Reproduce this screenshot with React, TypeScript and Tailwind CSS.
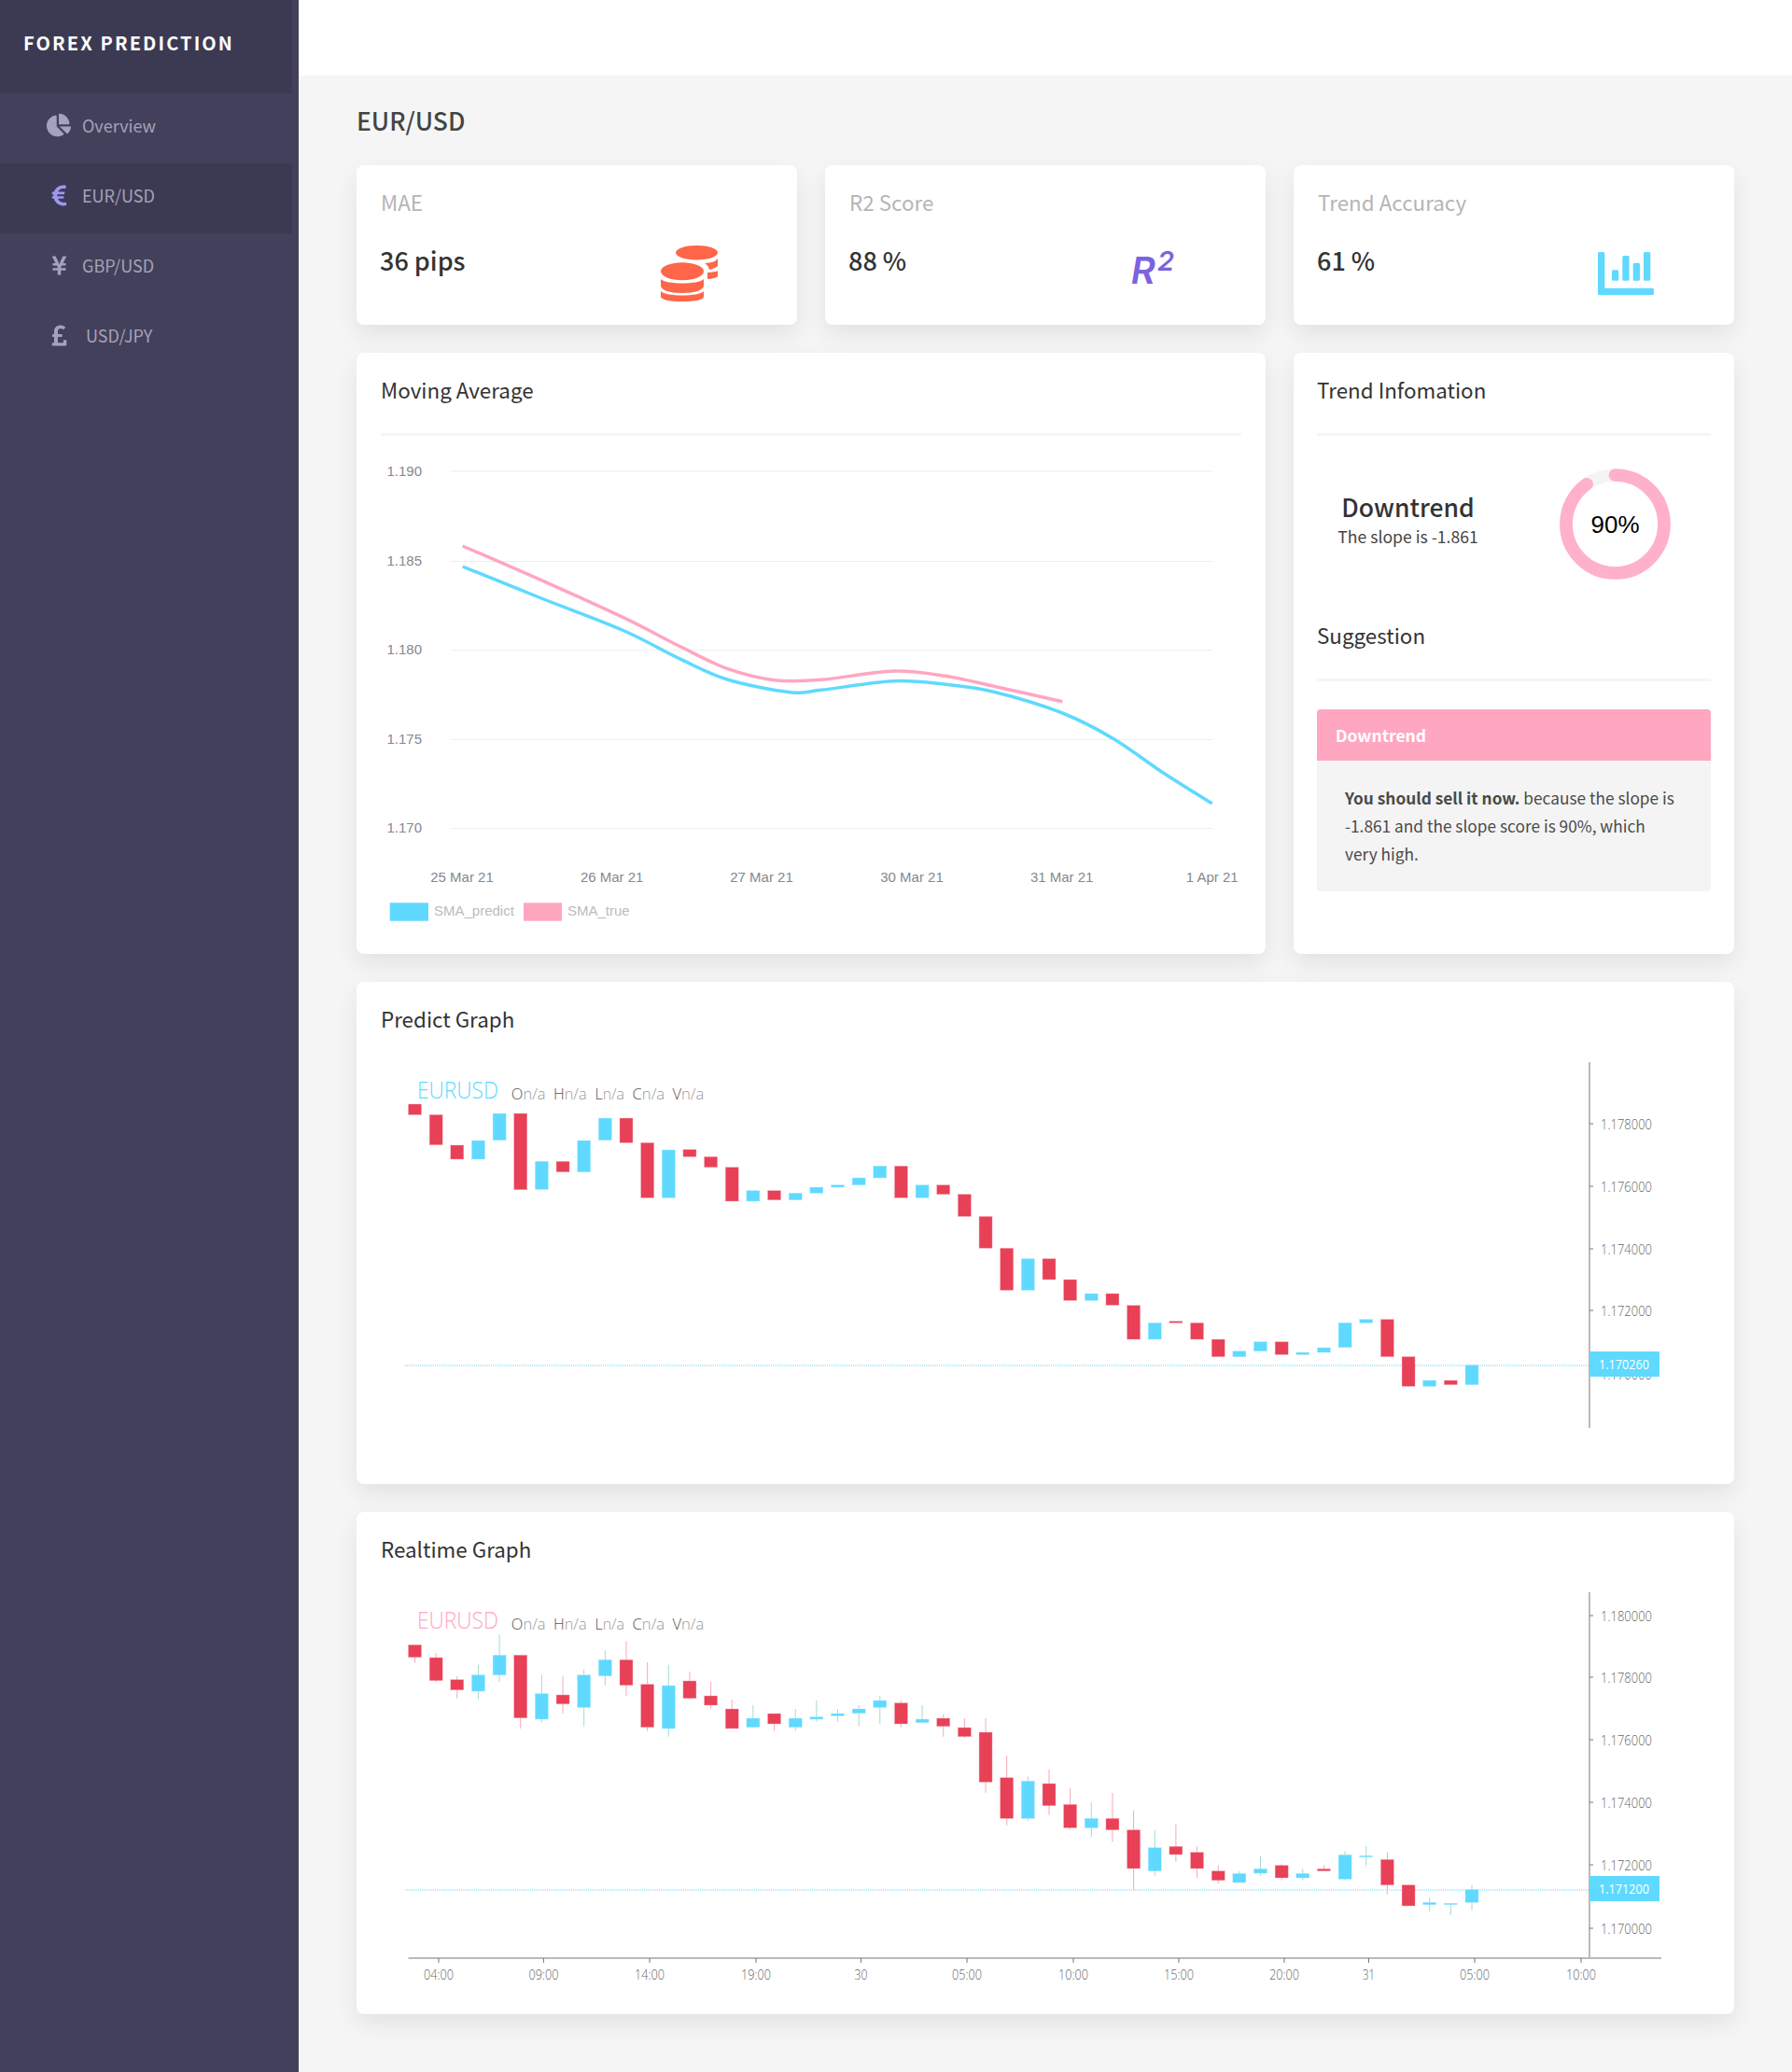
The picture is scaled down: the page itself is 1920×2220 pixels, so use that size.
import { FaChartPie, FaEuroSign, FaYenSign, FaPoundSign } from "react-icons/fa";

const BLUE = "#5fd9ff";
const PINK = "#ffa6c1";
const RED = "#e84057";

type Candle = [number, number, "r" | "b", number?, number?];

// y values are thirds of a pixel, measured from the chart's base line
const predictData: Candle[] = [
    [189, 223, "r"], [223, 320, "r"], [321, 366, "r"], [306, 366, "b"], [219, 305, "b"],
    [219, 464, "r"], [373, 463, "b"], [373, 407, "r"], [306, 407, "b"], [234, 305, "b"],
    [234, 313, "r"], [313, 490, "r"], [336, 490, "b"], [335, 358, "r"], [358, 392, "r"],
    [392, 501, "r"], [467, 501, "b"], [467, 497, "r"], [475, 497, "b"], [456, 475, "b"],
    [449, 456, "b"], [426, 449, "b"], [388, 426, "b"], [388, 490, "r"], [449, 490, "b"],
    [449, 479, "r"], [479, 550, "r"], [550, 652, "r"], [652, 787, "r"], [686, 787, "b"],
    [686, 753, "r"], [753, 820, "r"], [798, 820, "b"], [798, 835, "r"], [836, 945, "r"],
    [892, 945, "b"], [887, 892, "r"], [892, 945, "r"], [945, 1001, "r"], [983, 1001, "b"],
    [953, 983, "b"], [953, 994, "r"], [987, 994, "b"], [972, 987, "b"], [892, 971, "b"],
    [881, 892, "b"], [881, 1001, "r"], [1001, 1096, "r"], [1077, 1096, "b"], [1077, 1091, "r"],
    [1028, 1091, "b"],
];

const realtimeData: Candle[] = [
    [217, 257, "r", 217, 275], [258, 332, "r", 243, 336], [329, 362, "r", 318, 389], [314, 366, "b", 281, 392],
    [250, 314, "b", 183, 336], [250, 452, "r", 250, 486], [374, 456, "b", 314, 467], [378, 407, "r", 318, 437],
    [314, 418, "b", 295, 479], [265, 317, "b", 235, 347], [265, 347, "r", 205, 381], [344, 482, "r", 273, 494],
    [348, 486, "b", 281, 512], [333, 389, "r", 303, 392], [381, 411, "r", 336, 422], [423, 486, "r", 393, 486],
    [453, 482, "b", 411, 482], [438, 471, "r", 438, 494], [453, 482, "b", 423, 494], [449, 456, "b", 396, 464],
    [438, 445, "b", 423, 464], [423, 437, "b", 411, 479], [396, 418, "b", 381, 471], [404, 471, "r", 396, 482],
    [456, 467, "b", 411, 467], [453, 479, "r", 441, 512], [483, 512, "r", 453, 516],
    [498, 658, "r", 453, 692], [644, 775, "r", 573, 797], [655, 775, "b", 640, 782], [663, 734, "r", 618, 764],
    [730, 805, "r", 678, 812], [775, 805, "b", 723, 835], [775, 812, "r", 693, 850], [812, 936, "r", 749, 1005],
    [869, 944, "b", 812, 959], [865, 891, "r", 794, 914], [884, 936, "r", 865, 966], [944, 974, "r", 925, 985],
    [952, 981, "b", 944, 981], [937, 951, "b", 895, 959], [926, 966, "r", 922, 974], [952, 966, "b", 937, 974],
    [937, 944, "r", 925, 944], [892, 970, "b", 880, 974], [895, 899, "b", 865, 929], [907, 989, "r", 884, 1019],
    [989, 1056, "r", 989, 1056], [1045, 1052, "b", 1030, 1075], [1048, 1052, "b", 1048, 1086], [1004, 1045, "b", 989, 1071],
];

const smooth = (pts: number[][]) => {
    let d = `M${pts[0][0]} ${pts[0][1]}`;
    for (let i = 0; i < pts.length - 1; i++) {
        const p0 = pts[Math.max(i - 1, 0)];
        const p1 = pts[i];
        const p2 = pts[i + 1];
        const p3 = pts[Math.min(i + 2, pts.length - 1)];
        const c1 = [p1[0] + (p2[0] - p0[0]) / 6, p1[1] + (p2[1] - p0[1]) / 6];
        const c2 = [p2[0] - (p3[0] - p1[0]) / 6, p2[1] - (p3[1] - p1[1]) / 6];
        d += ` C${c1[0]} ${c1[1]} ${c2[0]} ${c2[1]} ${p2[0]} ${p2[1]}`;
    }
    return d;
};

const pinkLine = [[495.7, 585], [580, 621.7], [670, 662.7], [730, 693.3], [780, 716.7], [830, 728.7], [880, 728.3], [956.7, 719], [1013.3, 724.3], [1066.7, 735.7], [1138.3, 751.7]];
const blueLine = [[495.7, 607], [580, 641], [666.7, 675], [730, 706.7], [780, 728.3], [846.7, 741.7], [880, 739.3], [956.7, 729.7], [1013.3, 733.3], [1066.7, 741.7], [1138.3, 764], [1193.3, 791.7], [1246.7, 828.3], [1298.7, 861]];

function Coins() {
    return (
        <svg width="61" height="60" viewBox="0 0 61 60" fill="#ff6548">
            <ellipse cx="38.5" cy="7.7" rx="22.5" ry="7.7" />
            <path d="M61 14V21C61 23 57 25 52 26C51 22 49 20 47 19C54 19 59 17 61 14Z" />
            <path d="M61 27V32C61 34 58 35.5 50 36V29C57 28.5 60 28 61 27Z" />
            <ellipse cx="23" cy="27.7" rx="23" ry="9.5" />
            <path d="M0 36C5 42 41 42 46 36V43C46 48 36 51 23 51C10 51 0 48 0 43Z" />
            <path d="M0 49C5 55 41 55 46 49V55C46 58 36 60 23 60C10 60 0 58 0 55Z" />
        </svg>
    );
}

function Bars() {
    return (
        <svg width="60" height="46" viewBox="0 0 60 46" fill={BLUE}>
            <path d="M1.5 0H6A1.5 1.5 0 0 1 7.3 1.5V38.7H58.5A1.5 1.5 0 0 1 60 40.2V44.5A1.5 1.5 0 0 1 58.5 46H1.5A1.5 1.5 0 0 1 0 44.5V1.5A1.5 1.5 0 0 1 1.5 0Z" />
            <rect x="15" y="19.3" width="7.3" height="11.4" rx="1.5" />
            <rect x="26.3" y="4" width="7.3" height="26.7" rx="1.5" />
            <rect x="37.7" y="11.7" width="7.3" height="19" rx="1.5" />
            <rect x="49" y="0" width="7.3" height="30.7" rx="1.5" />
        </svg>
    );
}

function StatCard({ label, value, icon, iconClass }: { label: string; value: string; icon: React.ReactNode; iconClass: string }) {
    return (
        <div className="h-[171px] rounded-lg bg-white px-[26px] pt-[26px] shadow-[0_10px_25px_rgba(0,0,0,0.08)]">
            <div className="pb-[3px] text-[22.4px] leading-[27px] text-[#b5b5b5]">{label}</div>
            <div className="mt-[26px] flex items-start justify-between">
                <div className="-ml-px text-[27px] font-medium leading-[40px] text-[#333]">{value}</div>
                <div className={iconClass}>{icon}</div>
            </div>
        </div>
    );
}

function CardTitle({ children }: { children: React.ReactNode }) {
    return <div className="pb-[3px] text-[22.4px] leading-[27px] text-[#333]">{children}</div>;
}

function Divider() {
    return <div className="mt-[30px] h-[3px] bg-[#f5f5f5]" />;
}

function MovingAverage() {
    const grid = [[505, "1.190"], [601.5, "1.185"], [696.5, "1.180"], [792.5, "1.175"], [887.5, "1.170"]] as const;
    const dates = [[495, "25 Mar 21"], [655.7, "26 Mar 21"], [816, "27 Mar 21"], [977, "30 Mar 21"], [1137.7, "31 Mar 21"], [1298.7, "1 Apr 21"]] as const;
    return (
        <svg width="922" height="530" viewBox="408 470 922 530" className="block" fontFamily="'Liberation Sans', sans-serif" fontSize="15">
            {grid.map(([y, t]) => (
                <g key={t}>
                    <line x1="483" x2="1299" y1={y} y2={y} stroke="#eeeeee" strokeWidth="1.2" />
                    <text x="452" y={y + 4.5} textAnchor="end" fill="#85888e">{t}</text>
                </g>
            ))}
            {dates.map(([x, t]) => (
                <text key={t} x={x} y={945} textAnchor="middle" fill="#85888e">{t}</text>
            ))}
            <path d={smooth(blueLine)} fill="none" stroke={BLUE} strokeWidth="3.5" />
            <path d={smooth(pinkLine)} fill="none" stroke={PINK} strokeWidth="3.5" />
            <rect x="417.7" y="967.3" width="41.3" height="19.4" fill={BLUE} />
            <text x="465" y="981" fill="#bbbbbb">SMA_predict</text>
            <rect x="561" y="967.3" width="41" height="19.4" fill={PINK} />
            <text x="608" y="981" fill="#bbbbbb">SMA_true</text>
        </svg>
    );
}

function CandleChart({ y0, data, baseA, baseB, titleColor, legendY, labelY, priceY, price, ticks, axisTop, axisBottom, xTicks }: {
    y0: number;
    data: Candle[];
    baseA: number;
    baseB: number;
    titleColor: string;
    legendY: number;
    labelY: number;
    priceY: number;
    price: string;
    ticks: [number, string][];
    axisTop: number;
    axisBottom: number;
    xTicks?: [number, string, number][];
}) {
    const legend: [string, number, number][] = [["O", 547.8, 36.7], ["H", 593, 35.6], ["L", 637.5, 31.5], ["C", 677.5, 34.7], ["V", 720.4, 33.9]];
    return (
        <svg width="1424" height="440" viewBox={`408 ${y0} 1424 440`} className="block" fontFamily="'Open Sans', sans-serif">
            <text x="447" y={legendY + 9} fill={titleColor} fontSize="25" fontWeight="300" textLength="87" lengthAdjust="spacingAndGlyphs">EURUSD</text>
            {legend.map(([k, x, w]) => (
                <text key={k} x={x} y={labelY + 5.5} fontSize="17" fontWeight="300" fill="#999" textLength={w} lengthAdjust="spacingAndGlyphs">
                    <tspan fill="#555">{k}</tspan>n/a
                </text>
            ))}
            <line x1="434" x2="1703" y1={priceY} y2={priceY} stroke={BLUE} strokeDasharray="1 1" />
            {data.map(([top, bottom, c, wt, wb], i) => {
                const base = i < 27 ? baseA : baseB;
                const x = 437.5 + 22.65 * i;
                return (
                    <g key={i}>
                        {wt !== undefined && wb !== undefined && (
                            <line x1={x + 7} x2={x + 7} y1={base + wt / 3} y2={base + wb / 3} stroke={c === "r" ? "#f5a9b4" : "#a3dccb"} />
                        )}
                        <rect x={x} y={base + top / 3} width="14" height={(bottom - top) / 3} fill={c === "r" ? RED : BLUE} stroke={c === "r" ? "#f5a9b4" : "#a5e8ff"} strokeWidth="0.4" />
                    </g>
                );
            })}
            <line x1="1703" x2="1703" y1={axisTop} y2={axisBottom} stroke="#777" />
            {ticks.map(([y, t]) => (
                <g key={t}>
                    <line x1="1703" x2="1707" y1={y} y2={y} stroke="#777" />
                    <text x="1715" y={y + 5.5} fontSize="14" fontWeight="300" fill="#666" textLength="55" lengthAdjust="spacingAndGlyphs">{t}</text>
                </g>
            ))}
            <rect x="1703" y={priceY - 15} width="75" height="27" fill={BLUE} />
            <text x="1713" y={priceY + 3.5} fontSize="14" fill="#fff" textLength="54" lengthAdjust="spacingAndGlyphs">{price}</text>
            {xTicks && <line x1="437.5" x2="1780" y1="2098" y2="2098" stroke="#777" strokeWidth="1.2" />}
            {xTicks?.map(([x, t, w], i) => (
                <g key={i}>
                    <line x1={x} x2={x} y1="2098" y2="2103" stroke="#777" />
                    <text x={x - w / 2} y="2121" fontSize="14" fontWeight="300" fill="#666" textLength={w} lengthAdjust="spacingAndGlyphs">{t}</text>
                </g>
            ))}
        </svg>
    );
}

function Donut() {
    const r = 52.5;
    const len = 2 * Math.PI * r;
    return (
        <div className="relative ml-[65px] h-[119px] w-[119px]">
            <svg width="119" height="119" viewBox="0 0 119 119" className="block -rotate-90">
                <circle cx="59.5" cy="59.5" r={r} fill="none" stroke="#f4f4f4" strokeWidth="13.7" />
                <circle cx="59.5" cy="59.5" r={r} fill="none" stroke="#ffb0cb" strokeWidth="13.7" strokeLinecap="round" strokeDasharray={`${len * 0.9} ${len}`} />
            </svg>
            <div className="absolute inset-0 flex items-center justify-center pt-[2px] font-['Liberation_Sans',sans-serif] text-[26px] text-black">90%</div>
        </div>
    );
}

const navItems = [
    { label: "Overview", icon: <FaChartPie className="h-[26px] w-[26px]" />, active: false, textClass: "ml-[12px]" },
    { label: "EUR/USD", icon: <FaEuroSign className="h-[25px] w-[17px]" />, active: true, textClass: "ml-[12px]" },
    { label: "GBP/USD", icon: <FaYenSign className="h-[25px] w-[17px]" />, active: false, textClass: "ml-[12px]" },
    { label: "USD/JPY", icon: <FaPoundSign className="h-[25px] w-[17px]" />, active: false, textClass: "ml-[16px]" },
];

export default function App() {
    return (
        <div className="flex min-h-[2220px] w-[1920px] font-['Noto_Sans_CJK_SC','Noto_Sans',sans-serif]">
            {/* Sidebar */}
            <aside className="w-[320px] shrink-0 bg-[#43405b]">
                <div className="h-[100px] w-[313px] bg-[#3c3a52] pl-[25px] pt-[31px] text-[20px] font-bold leading-[30px] tracking-[2.1px] text-white">
                    FOREX PREDICTION
                </div>
                {navItems.map((item) => (
                    <div key={item.label} className={`flex h-[75px] w-[313px] items-center pb-[7px] pl-[50px] text-[18px] text-[#a3a2b8] ${item.active ? "bg-[#3c3a52]" : ""}`}>
                        <div className={`flex w-[26px] justify-center ${item.active ? "text-[#9d97f0]" : "text-[#a3a3c0]"}`}>{item.icon}</div>
                        <span className={item.textClass}>{item.label}</span>
                    </div>
                ))}
            </aside>

            <main className="flex-1 bg-[#f5f5f5]">
                <div className="h-[81px] bg-white" />
                <div className="px-[62px]">
                    <h1 className="pt-[28px] text-[26.4px] font-medium leading-[40px] text-[#444]">EUR/USD</h1>

                    {/* Stats */}
                    <div className="mt-[28px] grid grid-cols-3 gap-[30px]">
                        <StatCard label="MAE" value="36 pips" icon={<Coins />} iconClass="mr-[59px] mt-[4px]" />
                        <StatCard
                            label="R2 Score"
                            value="88 %"
                            iconClass="mr-[72px] mt-[11px] flex items-start font-['Inter',sans-serif] italic font-semibold leading-none text-[#7c62e0]"
                            icon={<><span className="text-[40px]">R</span><span className="ml-[2px] -mt-[5px] text-[29px]">2</span></>}
                        />
                        <StatCard label="Trend Accuracy" value="61 %" icon={<Bars />} iconClass="mr-[60px] mt-[11px]" />

                        <div className="col-span-2 h-[644px] rounded-lg bg-white px-[26px] pt-[26px] shadow-[0_10px_25px_rgba(0,0,0,0.08)]">
                            <CardTitle>Moving Average</CardTitle>
                            <Divider />
                            <div className="mt-[3px]"><MovingAverage /></div>
                        </div>

                        <div className="h-[644px] rounded-lg bg-white px-[25px] pt-[26px] shadow-[0_10px_25px_rgba(0,0,0,0.08)]">
                            <CardTitle>Trend Infomation</CardTitle>
                            <Divider />
                            <div className="flex items-center pt-[35px]">
                                <div className="w-[195px] pb-[10px] text-center">
                                    <div className="text-[26.5px] font-medium leading-[36px] text-[#333]">Downtrend</div>
                                    <div className="text-[17.6px] leading-[28px] text-[#444]">The slope is -1.861</div>
                                </div>
                                <Donut />
                            </div>
                            <div className="mt-[46px]"><CardTitle>Suggestion</CardTitle></div>
                            <Divider />
                            <div className="mt-[30px] overflow-hidden rounded">
                                <div className="h-[55px] bg-[#ffa6c1] pl-[20px] text-[17.5px] font-bold leading-[55px] text-white">Downtrend</div>
                                <div className="h-[140px] bg-[#f4f4f4] pl-[30px] pr-[34px] pt-[25px] text-[17.3px] leading-[30px] text-[#4a4a4a]">
                                    <b className="font-bold">You should sell it now.</b> because the slope is -1.861 and the slope score is 90%, which very high.
                                </div>
                            </div>
                        </div>

                        <div className="col-span-3 h-[538px] rounded-lg bg-white px-[26px] pt-[26px] shadow-[0_10px_25px_rgba(0,0,0,0.08)]">
                            <CardTitle>Predict Graph</CardTitle>
                            <div className="mt-[22px]">
                                <CandleChart
                                    y0={1130}
                                    data={predictData}
                                    baseA={1120}
                                    baseB={1120}
                                    titleColor={BLUE}
                                    legendY={1168}
                                    labelY={1172}
                                    priceY={1463}
                                    price="1.170260"
                                    axisTop={1138}
                                    axisBottom={1530}
                                    ticks={[[1204, "1.178000"], [1271, "1.176000"], [1338, "1.174000"], [1404, "1.172000"], [1472, "1.170000"]]}
                                />
                            </div>
                        </div>

                        <div className="col-span-3 h-[538px] rounded-lg bg-white px-[26px] pt-[26px] shadow-[0_10px_25px_rgba(0,0,0,0.08)]">
                            <CardTitle>Realtime Graph</CardTitle>
                            <div className="mt-[22px]">
                                <CandleChart
                                    y0={1698}
                                    data={realtimeData}
                                    baseA={1690}
                                    baseB={1690}
                                    titleColor={PINK}
                                    legendY={1736}
                                    labelY={1740}
                                    priceY={2025}
                                    price="1.171200"
                                    axisTop={1706}
                                    axisBottom={2097}
                                    ticks={[[1731, "1.180000"], [1797, "1.178000"], [1864, "1.176000"], [1931, "1.174000"], [1998, "1.172000"], [2066, "1.170000"]]}
                                    xTicks={[[470, "04:00", 32], [582.4, "09:00", 32], [696, "14:00", 32], [810, "19:00", 32], [922.4, "30", 14], [1036, "05:00", 32], [1150, "10:00", 32], [1263, "15:00", 32], [1376, "20:00", 32], [1466.5, "31", 13], [1580, "05:00", 32], [1694, "10:00", 32]]}
                                />
                            </div>
                        </div>
                    </div>
                </div>
            </main>
        </div>
    );
}
